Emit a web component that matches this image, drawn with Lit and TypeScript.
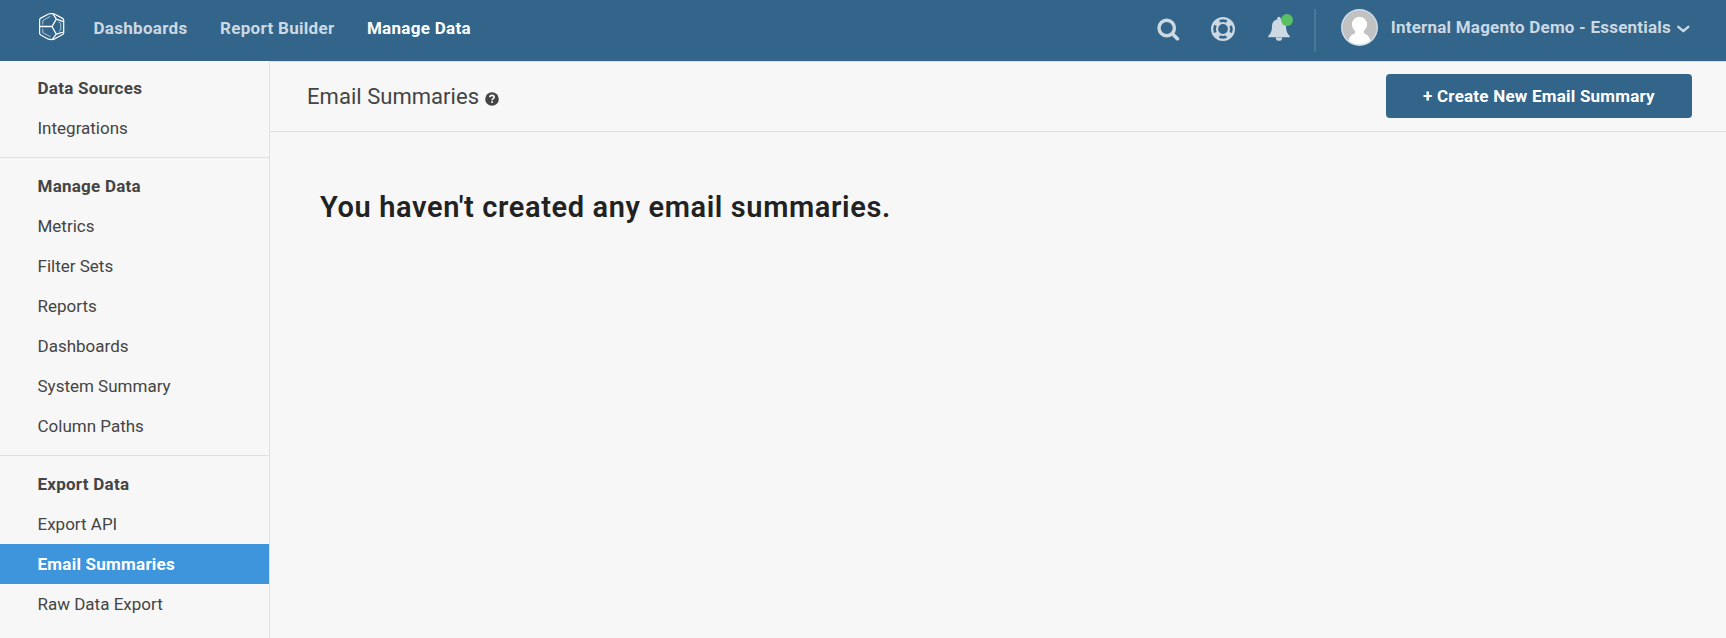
import { LitElement, html, css } from 'lit';
import { customElement } from 'lit/decorators.js';
import { classMap } from 'lit/directives/class-map.js';

interface Item { label: string; active?: boolean; }
interface Section { title: string; items: Item[]; }

const NAV: Item[] = [
  { label: 'Dashboards' },
  { label: 'Report Builder' },
  { label: 'Manage Data', active: true },
];

const SECTIONS: Section[] = [
  { title: 'Data Sources', items: [{ label: 'Integrations' }] },
  {
    title: 'Manage Data',
    items: [
      { label: 'Metrics' }, { label: 'Filter Sets' }, { label: 'Reports' },
      { label: 'Dashboards' }, { label: 'System Summary' }, { label: 'Column Paths' },
    ],
  },
  {
    title: 'Export Data',
    items: [{ label: 'Export API' }, { label: 'Email Summaries', active: true }, { label: 'Raw Data Export' }],
  },
];

@customElement('top-bar')
class TopBar extends LitElement {
  static styles = css`
    :host { display: flex; box-sizing: border-box; height: 61px; padding: 0 36px 0 38px; background: #33658a; color: #ccd8e2; font: 700 17px/24px Roboto, sans-serif; letter-spacing: 0.22px; white-space: nowrap; }
    svg { display: block; flex: none; }
    .logo { margin: 12px 0 0; }
    .nav { display: flex; gap: 32.5px; margin: 16px 0 0 28.500px; letter-spacing: 0.3px; }
    .nav a.active { color: #fff; }
    .icons { display: flex; margin: 16px 0 0 auto; }
    .search { margin: 2px 30px 0 0; }
    .help { margin: 0 31px 0 0; }
    .bell { position: relative; width: 24px; height: 26px; }
    .dot { position: absolute; left: 14px; top: -2px; width: 12px; height: 12px; border-radius: 50%; background: #59c164; }
    .rule { width: 2px; height: 43px; margin: 9px 25px 0 23px; background: #4c7898; }
    .avatar { margin: 9px 12.5px 0 0; }
    .account { margin-top: 15px; }
    .caret { margin: 24px 0 0 5px; }
  `;

  render() {
    return html`
      <svg class="logo" width="27" height="29" viewBox="0 0 27 29" fill="none" stroke="#fff" stroke-linejoin="round">
        <path d="M10.500 2 L13.500 1.500 L16.500 2 L25 6.600 L25.700 8 V21 L25 22.300 L16 27.200 L13.500 27.700 L10.500 27.200 L2.300 22.800 L1.600 21.300 V7.700 L2.300 6.400 Z" stroke-width="1.2" />
        <path d="M1.800 14.500 H14 L18.300 7.200 L15 1.900 M14 14.500 L18.300 22.200 L14.500 27.200 M18.300 7.200 L25.400 9.600 M18.300 22.200 L25.400 20" stroke-width="1.3" />
        <path d="M4.800 12.600 V8.600 L12.400 4.300 M4.800 16.800 V20.600 L12.400 24.800 M20.600 9.800 L22.800 11.500 V17.600 L20.800 19.400" stroke-width=".8" opacity=".8" />
      </svg>
      <nav class="nav">${NAV.map((n) => html`<a class=${classMap({ active: !!n.active })}>${n.label}</a>`)}</nav>
      <div class="icons">
        <svg class="search" width="23" height="24" viewBox="0 0 23 24" fill="none" stroke="#ccd8e2">
          <circle cx="9.7" cy="10" r="7.7" stroke-width="3.4" />
          <path d="M15.6 16 L20.4 20.7" stroke-width="3.7" stroke-linecap="round" />
        </svg>
        <svg class="help" width="26" height="26" viewBox="0 0 26 26" fill="none" stroke="#ccd8e2">
          <circle cx="13" cy="13" r="10.900" stroke-width="2.200" />
          <circle cx="13" cy="13" r="6" stroke-width="2.200" />
          <circle cx="13" cy="13" r="8.5" stroke-width="5" stroke-dasharray="6 7.352" stroke-dashoffset="-3.676" />
        </svg>
        <div class="bell">
          <svg width="24" height="26" viewBox="0 0 24 26" fill="#ccd8e2">
            <path d="M12 .8c-1 0-1.7.8-1.7 1.7v.7C6.700 4 5 6.800 5 10.200c0 4.800-1.500 7.800-3.700 9.700-.5.500-.2 1.300.5 1.300h20.400c.7 0 1-.8.500-1.300-2.200-1.900-3.700-4.900-3.700-9.700 0-3.400-1.700-6.200-5.300-7v-.7C13.700 1.600 13 .8 12 .8z" />
            <path d="M8.800 21.400a3.200 3.400 0 0 0 6.400 0z" />
          </svg>
          <i class="dot"></i>
        </div>
      </div>
      <div class="rule"></div>
      <svg class="avatar" width="37" height="37" viewBox="0 0 37 37">
        <defs><clipPath id="c"><circle cx="18.5" cy="18.5" r="17" /></clipPath></defs>
        <circle cx="18.5" cy="18.5" r="18.5" fill="#cfdbe4" />
        <circle cx="18.5" cy="18.5" r="17" fill="#c2c2c2" />
        <g clip-path="url(#c)" fill="#fff">
          <ellipse cx="18.5" cy="15.600" rx="7.600" ry="7.800" />
          <path d="M14 21h9v3.500c4.200 1.200 6.500 4.500 7 11.500h-23c.500-7 2.800-10.300 7-11.500z" />
        </g>
      </svg>
      <span class="account">Internal Magento Demo - Essentials</span>
      <svg class="caret" width="14" height="10" viewBox="0 0 14 10" fill="none" stroke="#ccd8e2" stroke-width="2.400" stroke-linecap="round" stroke-linejoin="round"><path d="M2.300 2.800 L7.300 7.200 L12.300 2.800" /></svg>
    `;
  }
}

@customElement('side-menu')
class SideMenu extends LitElement {
  static styles = css`
    :host { display: block; box-sizing: border-box; width: 270px; flex: none; border-right: 1px solid #e0e0e0; font: 400 17px/40px Roboto, sans-serif; color: #444; }
    section { padding: 8px 0 9px; border-bottom: 1px solid #e0e0e0; }
    section:first-child { padding-top: 7px; }
    section:last-child { border-bottom: 0; }
    .title, .item { height: 40px; padding-left: 37.500px; }
    .title, .active { font-weight: 700; letter-spacing: 0.25px; }
    .active { background: #3f95dc; color: #fff; }
  `;

  render() {
    return SECTIONS.map((s) => html`
      <section>
        <div class="title">${s.title}</div>
        ${s.items.map((i) => html`<div class=${classMap({ item: true, active: !!i.active })}>${i.label}</div>`)}
      </section>`);
  }
}

@customElement('app-root')
class AppRoot extends LitElement {
  static styles = css`
    :host { display: flex; flex-direction: column; height: 638px; overflow: hidden; background: #f7f7f7; font-family: Roboto, sans-serif; }
    .body { display: flex; flex: 1; }
    main { flex: 1; }
    .head { display: flex; align-items: center; box-sizing: border-box; height: 71px; padding: 0 34px 0 37px; border-top: 1px solid #e0e0e0; border-bottom: 1px solid #e0e0e0; }
    .title { margin: 1px 0 0; font-size: 22px; font-weight: 400; line-height: 30px; letter-spacing: 0.04px; color: #444; }
    .hint { margin: 4px auto 0 6px; }
    .create { width: 306px; height: 44px; margin-bottom: 1px; border: 0; border-radius: 4px; padding: 0; background: #33658a; color: #fff; font: 700 17px/44px Roboto, sans-serif; letter-spacing: 0.22px; }
    .empty { margin: 55px 0 0 50px; font-size: 29px; font-weight: 600; line-height: 40px; letter-spacing: 0.62px; color: #222; }
  `;

  render() {
    return html`
      <top-bar></top-bar>
      <div class="body">
        <side-menu></side-menu>
        <main>
          <div class="head">
            <h1 class="title">Email Summaries</h1>
            <svg class="hint" width="14" height="14" viewBox="0 0 14 14">
              <circle cx="7" cy="7" r="6.800" fill="#444" />
              <path d="M4.900 5.300 C5 3.700 6 3.300 7 3.300 C8.300 3.300 9.200 4 9.200 5.100 C9.200 6.700 7.100 6.600 7.100 8.300" fill="none" stroke="#f7f7f7" stroke-width="1.700" />
              <rect x="6.200" y="9.200" width="1.800" height="1.700" fill="#f7f7f7" />
            </svg>
            <button class="create">+ Create New Email Summary</button>
          </div>
          <h2 class="empty">You haven't created any email summaries.</h2>
        </main>
      </div>`;
  }
}
